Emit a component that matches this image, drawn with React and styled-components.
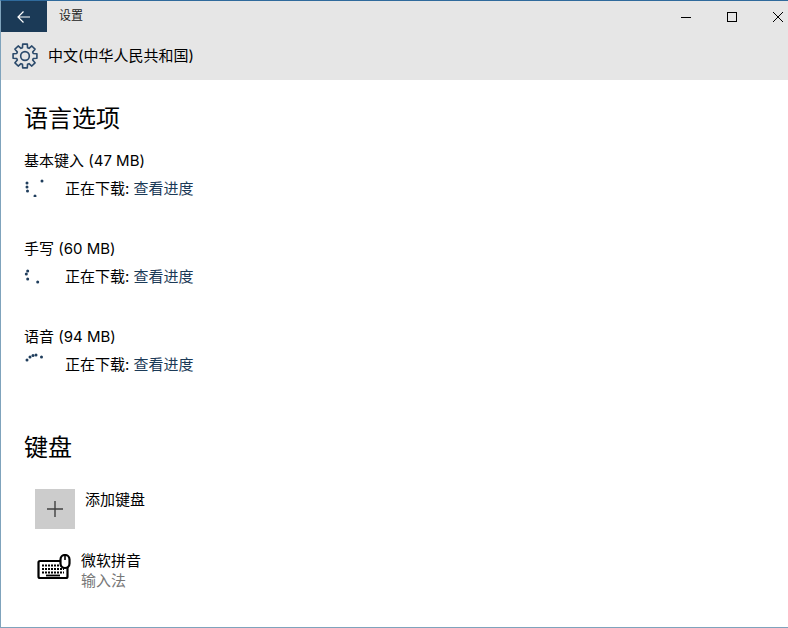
import styled, { createGlobalStyle } from 'styled-components';

const GlobalStyle = createGlobalStyle`
    html, body {
        margin: 0;
        padding: 0;
        background: #fff;
    }
    body {
        font-family: "Inter", "Noto Sans CJK SC", sans-serif;
        color: #111;
    }
`;

const downloads = [
    {
        title: '基本键入 (47 MB)',
        dots: [[3, 6], [3, 10], [3.5, 14], [11, 19], [18, 4]],
    },
    {
        title: '手写 (60 MB)',
        dots: [[3.7, 6], [2.3, 9], [3.7, 14], [13.7, 17]],
    },
    {
        title: '语音 (94 MB)',
        dots: [[3, 7], [6, 4], [9, 2.5], [12, 2], [17.5, 4]],
    },
];

// outline of the cog, 8 teeth around the centre
const cogPath = () => {
    const points = [];
    for (let i = 0; i < 8; i++) {
        const a = (i * Math.PI) / 4;
        [[-0.3, 8], [-0.19, 11.2], [0.19, 11.2], [0.3, 8]].forEach(([da, r]) => {
            points.push(`${(12 + r * Math.sin(a + da)).toFixed(2)} ${(12 - r * Math.cos(a + da)).toFixed(2)}`);
        });
    }
    return `M${points.join(' L')} Z`;
};

const Spinner = ({ dots }) => (
    <SpinnerBox viewBox="0 0 20 20">
        {dots.map(([cx, cy], index) => (
            <circle key={index} cx={cx} cy={cy} r="1.5" fill="#1f3d5c" />
        ))}
    </SpinnerBox>
);

const App = () => (
    <Window>
        <GlobalStyle />
        <TitleBar>
            <BackButton>
                <svg width="16" height="16" viewBox="0 0 16 16" fill="none" stroke="#fff" strokeWidth="1.2">
                    <path d="M2 8 H14 M7.5 2.5 L2 8 L7.5 13.5" />
                </svg>
            </BackButton>
            <WindowTitle>设置</WindowTitle>
            <WindowControls>
                <ControlButton>
                    <svg width="12" height="12" viewBox="0 0 12 12" fill="none" stroke="#000">
                        <path d="M1 6.5 H11" />
                    </svg>
                </ControlButton>
                <ControlButton>
                    <svg width="12" height="12" viewBox="0 0 12 12" fill="none" stroke="#000">
                        <rect x="1.5" y="1.5" width="9" height="9" />
                    </svg>
                </ControlButton>
                <ControlButton>
                    <svg width="12" height="12" viewBox="0 0 12 12" fill="none" stroke="#000">
                        <path d="M1 1 L11 11 M11 1 L1 11" />
                    </svg>
                </ControlButton>
            </WindowControls>
        </TitleBar>
        <PageHeader>
            <svg width="26" height="26" viewBox="0 0 24 24" fill="none" stroke="#2b4a6b" strokeWidth="1.5">
                <path d={cogPath()} strokeLinejoin="round" />
                <circle cx="12" cy="12" r="4" />
            </svg>
            <PageName>中文(中华人民共和国)</PageName>
        </PageHeader>
        <Content>
            <SectionTitle>语言选项</SectionTitle>
            {downloads.map((item) => (
                <DownloadItem key={item.title}>
                    <ItemTitle>{item.title}</ItemTitle>
                    <StatusRow>
                        <Spinner dots={item.dots} />
                        <StatusText>
                            正在下载: <StatusLink>查看进度</StatusLink>
                        </StatusText>
                    </StatusRow>
                </DownloadItem>
            ))}
            <KeyboardTitle>键盘</KeyboardTitle>
            <AddRow>
                <PlusTile>
                    <svg width="16" height="16" viewBox="0 0 16 16" fill="none" stroke="#404040" strokeWidth="1.4">
                        <path d="M0 8 H16 M8 0 V16" />
                    </svg>
                </PlusTile>
                <AddLabel>添加键盘</AddLabel>
            </AddRow>
            <ImeRow>
                <ImeIcon width="34" height="26" viewBox="0 0 34 26" fill="none" stroke="#000">
                    <rect x="1.5" y="7" width="29" height="17" rx="1.5" strokeWidth="2.2" />
                    <path d="M5 11.5 H27 M5 15 H27 M5 18.5 H27" strokeWidth="1.8" strokeDasharray="2 1" />
                    <path d="M9 21.5 H23" strokeWidth="1.8" />
                    <rect x="23.5" y="1" width="9" height="13" rx="4.5" fill="#fff" strokeWidth="2.2" />
                    <path d="M28 1 V6" strokeWidth="1.6" />
                </ImeIcon>
                <ImeText>
                    <ImeName>微软拼音</ImeName>
                    <ImeType>输入法</ImeType>
                </ImeText>
            </ImeRow>
        </Content>
    </Window>
);

export default App;

const Window = styled.div`
    width: 788px;
    height: 628px;
    box-sizing: border-box;
    border: 1px solid #7fa3bc;
    border-top-color: #2f6a9c;
    border-right: 0;
    overflow: hidden;
    display: flex;
    flex-direction: column;
`;

const TitleBar = styled.div`
    height: 31px;
    background: #e6e6e6;
    display: flex;
    align-items: stretch;
`;

const BackButton = styled.div`
    width: 46px;
    background: #1b3a57;
    display: flex;
    align-items: center;
    justify-content: center;
`;

const WindowTitle = styled.div`
    margin-left: 12px;
    font-size: 12px;
    line-height: 30px;
    color: #222;
`;

const WindowControls = styled.div`
    margin-left: auto;
    margin-right: -13px;
    display: flex;
`;

const ControlButton = styled.div`
    width: 46px;
    display: flex;
    align-items: center;
    justify-content: center;
`;

const PageHeader = styled.div`
    height: 48px;
    background: #e6e6e6;
    display: flex;
    align-items: center;
    padding-left: 11px;
    gap: 10px;
`;

const PageName = styled.div`
    font-size: 15px;
    line-height: 20px;
    color: #000;
`;

const Content = styled.div`
    flex: 1;
    padding: 21px 0 0 23px;
`;

const SectionTitle = styled.div`
    font-size: 24px;
    line-height: 36px;
    color: #000;
    margin-bottom: 12px;
`;

const DownloadItem = styled.div`
    height: 88px;
`;

const ItemTitle = styled.div`
    height: 22px;
    font-size: 15px;
    line-height: 24px;
    color: #000;
`;

const StatusRow = styled.div`
    display: flex;
    align-items: center;
    height: 32px;
`;

const SpinnerBox = styled.svg`
    width: 20px;
    height: 20px;
    margin-right: 21px;
`;

const StatusText = styled.div`
    font-size: 15px;
    color: #000;
`;

const StatusLink = styled.span`
    color: #1b3a57;
`;

const KeyboardTitle = styled(SectionTitle)`
    margin-top: 17px;
    margin-bottom: 23px;
`;

const AddRow = styled.div`
    display: flex;
    align-items: flex-start;
    margin-left: 11px;
`;

const PlusTile = styled.div`
    width: 40px;
    height: 40px;
    background: #cccccc;
    display: flex;
    align-items: center;
    justify-content: center;
`;

const AddLabel = styled.div`
    margin-left: 10px;
    font-size: 15px;
    line-height: 22px;
    color: #000;
`;

const ImeRow = styled.div`
    display: flex;
    align-items: center;
    margin: 22px 0 0 13px;
`;

const ImeIcon = styled.svg`
    margin-bottom: 8px;
`;

const ImeText = styled.div`
    margin-left: 10px;
`;

const ImeName = styled.div`
    font-size: 15px;
    line-height: 20px;
    color: #000;
`;

const ImeType = styled.div`
    font-size: 15px;
    line-height: 20px;
    color: #777;
`;
